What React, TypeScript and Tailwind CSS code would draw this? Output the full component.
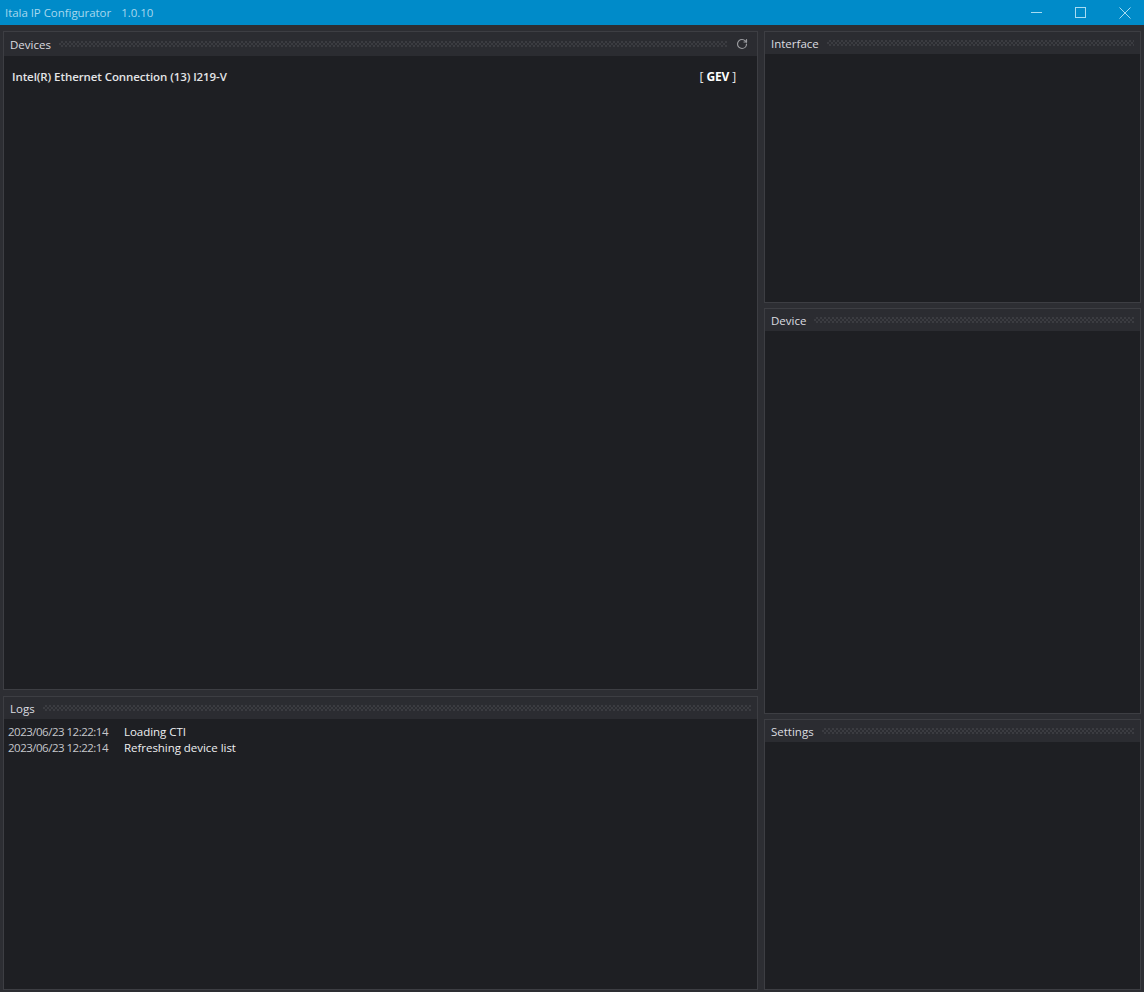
import { RotateCw } from 'lucide-react'

function Stripe() {
  return (
    <div className="h-[6px] min-w-0 flex-1 bg-[conic-gradient(#3b3c41_25%,#2b2c31_0_50%,#3b3c41_0_75%,#2b2c31_0)] bg-size-[4px_4px]" />
  )
}

function Panel({
  title,
  className,
  headerHeight = 'h-[22px]',
  action,
  children,
}: {
  title: string
  className: string
  headerHeight?: string
  action?: React.ReactNode
  children?: React.ReactNode
}) {
  return (
    <section className={`flex min-h-0 flex-col border border-[#3d3e43] bg-[#1e1f23] ${className}`}>
      <header className={`flex shrink-0 items-center gap-[8px] bg-[#2b2c31] pl-[6px] pr-[6px] ${headerHeight}`}>
        <span className="pt-[2px] text-[11.5px] leading-none text-[#dcdde0]">{title}</span>
        <Stripe />
        {action}
      </header>
      <div className="min-h-0 flex-1">{children}</div>
    </section>
  )
}

function LogRow({ time, text }: { time: string; text: string }) {
  return (
    <div className="flex h-[16px] items-center text-[11.5px] leading-none">
      <span className="w-[116px] shrink-0 tracking-[-0.5px] text-[#c6c7cb]">{time}</span>
      <span className="tracking-[-0.04px] text-[#eeeff1]">{text}</span>
    </div>
  )
}

export default function App() {
  return (
    <div className="flex h-[992px] w-[1144px] flex-col overflow-hidden bg-[#2d2e33] font-['Open_Sans',sans-serif]">
      {/* Title bar */}
      <div className="flex h-[25px] shrink-0 items-center justify-between bg-[#008bc9] pl-[5px]">
        <div className="flex gap-[10px] text-[11.5px] leading-none tracking-[-0.05px] text-[#a6d8ee]">
          <span>Itala IP Configurator</span>
          <span>1.0.10</span>
        </div>
        <div className="flex items-center text-[#a8dcf2]">
          <div className="flex h-[25px] w-[44px] items-center justify-center pl-[5px]">
            <svg width="11" height="11" viewBox="0 0 11 11" fill="none" stroke="currentColor">
              <path d="M0 5.5h11" />
            </svg>
          </div>
          <div className="flex h-[25px] w-[44px] items-center justify-center pl-[5px]">
            <svg width="11" height="11" viewBox="0 0 11 11" fill="none" stroke="currentColor">
              <rect x="0.5" y="0.5" width="10" height="10" />
            </svg>
          </div>
          <div className="flex h-[25px] w-[44px] items-center justify-center pl-[5px]">
            <svg width="12" height="12" viewBox="0 0 12 12" fill="none" stroke="currentColor">
              <path d="M0.5 0.5l11 11M11.5 0.5l-11 11" />
            </svg>
          </div>
        </div>
      </div>

      <div className="flex min-h-0 flex-1 gap-[6px] pb-[2px] pl-[3px] pr-[3px] pt-[6px]">
        {/* Left column */}
        <div className="flex w-[755px] shrink-0 flex-col gap-[6px]">
          <Panel
            title="Devices"
            className="h-[659px]"
            headerHeight="h-[24px]"
            action={<RotateCw size={12} strokeWidth={2.4} className="ml-[1px] mr-[3px] shrink-0 text-[#9a9b9f]" />}
          >
            <div className="flex items-center justify-between pl-2 pr-[21px] pt-[13px] text-[11.5px] font-semibold leading-4 tracking-[-0.08px] text-[#e4e5e7]">
              <span>Intel(R) Ethernet Connection (13) I219-V</span>
              <span className="text-[12px] font-normal">
                [ <b className="font-bold tracking-[-0.2px] text-white">GEV</b> ]
              </span>
            </div>
          </Panel>
          <Panel title="Logs" className="min-h-0 flex-1">
            <div className="pl-[4px] pt-[5px]">
              <LogRow time="2023/06/23 12:22:14" text="Loading CTI" />
              <LogRow time="2023/06/23 12:22:14" text="Refreshing device list" />
            </div>
          </Panel>
        </div>

        {/* Right column */}
        <div className="flex min-w-0 flex-1 flex-col gap-[5px]">
          <Panel title="Interface" className="h-[272px]" />
          <Panel title="Device" className="h-[406px]" />
          <Panel title="Settings" className="min-h-0 flex-1" />
        </div>
      </div>
    </div>
  )
}
